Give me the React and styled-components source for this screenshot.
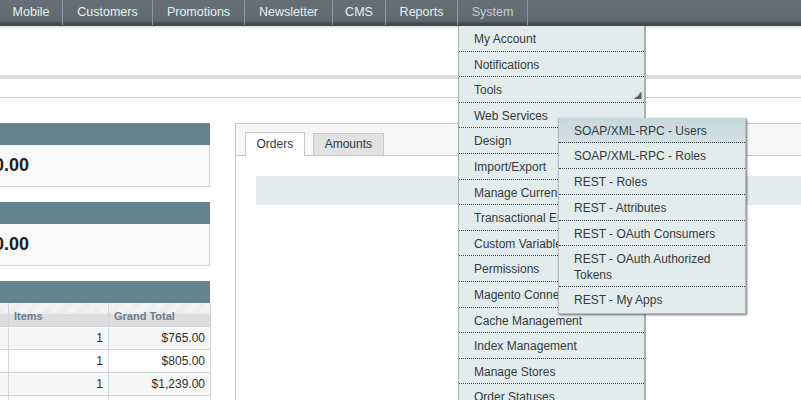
import React from "react";
import styled, { createGlobalStyle } from "styled-components";

const Global = createGlobalStyle`
  html, body { margin: 0; padding: 0; background: #fff; overflow: hidden; }
  body { font: 12px "Liberation Sans", Arial, sans-serif; color: #2f2f2f; }
`;

const Page = styled.div`
  width: 801px;
  height: 400px;
  overflow: hidden;
  position: relative;
`;

const Nav = styled.nav`
  display: flex;
  height: 26px;
  box-sizing: border-box;
  background: linear-gradient(#666f75 0, #5f6a70 21px, #454d52 23px, #3f474b 26px);
`;

const NavItem = styled.div`
  position: relative;
  flex: none;
  box-sizing: border-box;
  width: ${(p) => p.$w}px;
  height: 25px;
  border-right: 1px solid #8b979c;
  font-size: 12.5px;
  line-height: 24px;
  text-align: center;
  color: ${(p) => (p.$active ? "#c3cdd1" : "#e8eef0")};
`;

const Menu = styled.div`
  position: absolute;
  z-index: 5;
  top: 26px;
  left: 0;
  width: 188px;
  box-sizing: border-box;
  border-left: 1px solid #a9b0b2;
  border-right: 2px solid #a9b0b2;
  background: #e3ecec;
  text-align: left;
`;

const MenuItem = styled.div`
  position: relative;
  box-sizing: border-box;
  height: 25.6px;
  padding-left: 15px;
  border-bottom: 1px dotted #3c4448;
  font-size: 12px;
  line-height: 27px;
  color: #333b40;
`;

const Arrow = styled.svg`
  position: absolute;
  right: 2px;
  bottom: 2px;
  width: 9px;
  height: 9px;
`;

const SubMenu = styled.div`
  position: absolute;
  z-index: 6;
  top: 15px;
  left: 99px;
  width: 188px;
  box-sizing: border-box;
  border: 1px solid #b4bbbd;
  border-top: 0;
  background: #e3ecec;
  box-shadow: 1px 1px 2px rgba(0, 0, 0, 0.55);
`;

const SubItem = styled.div`
  box-sizing: border-box;
  min-height: 25.7px;
  padding: 5px 20px 3px 15px;
  border-bottom: ${(p) => (p.$last ? "0" : "1px dotted #3c4448")};
  font-size: 12px;
  line-height: 16px;
  color: #333b40;
  background: ${(p) => (p.$hot ? "linear-gradient(#c8d9dc, #d0e0e2)" : "transparent")};
`;

const TopStrip = styled.div`
  height: 2px;
  background: #e4eaea;
`;

const Header = styled.div`
  height: 47px;
  border-bottom: 4px solid #dcdcdc;
`;

const Notice = styled.div`
  height: 18px;
  border-bottom: 1px solid #ccc;
`;

const Content = styled.div`
  display: flex;
  align-items: flex-start;
  gap: 25px;
  padding-top: 25px;
  margin-left: -40px;
`;

const Side = styled.div`
  flex: none;
  width: 250px;
  display: flex;
  flex-direction: column;
  gap: 15px;
`;

const Card = styled.section``;

const CardHead = styled.div`
  height: 22px;
  background: #65838d;
`;

const CardBody = styled.div`
  box-sizing: border-box;
  height: 42px;
  padding-left: 23px;
  border: 1px solid #d2d6d8;
  border-top: 0;
  background: #f9f9f9;
  font-size: 18px;
  font-weight: bold;
  line-height: 40px;
  color: #222;
`;

const Table = styled.table`
  width: 250px;
  table-layout: fixed;
  border-collapse: collapse;
`;

const Th = styled.th`
  box-sizing: border-box;
  height: 23px;
  padding: 3px 0 0 5px;
  border: 1px solid #d2d6d8;
  border-top: 0;
  text-align: left;
  font-size: 11px;
  font-weight: bold;
  color: #6a7d8a;
  background:
    linear-gradient(transparent 11px, #dedede 11px),
    repeating-linear-gradient(135deg, #f6f6f6 0 1px, #e9e9e9 1px 2px);
`;

const Td = styled.td`
  box-sizing: border-box;
  height: 23px;
  padding: 0 5px 0 0;
  border: 1px solid #d2d6d8;
  text-align: right;
  font-size: 12px;
  color: #2f2f2f;
  background: ${(p) => (p.$odd ? "#f5f6f6" : "#fff")};
`;

const Orders = styled.section`
  flex: none;
  width: 700px;
  height: 400px;
  box-sizing: border-box;
  border: 1px solid #c8c8c8;
  border-right: 0;
`;

const TabBar = styled.div`
  display: flex;
  align-items: flex-end;
  gap: 8px;
  height: 32px;
  box-sizing: border-box;
  padding-left: 9px;
  border-bottom: 1px solid #c8c8c8;
  background: #f7f7f7;
`;

const Tab = styled.div`
  box-sizing: border-box;
  height: ${(p) => (p.$active ? "24px" : "22px")};
  padding: 0 ${(p) => (p.$active ? "10.5px" : "11px")};
  margin-bottom: ${(p) => (p.$active ? "-1px" : "0")};
  border: 1px solid #c8c8c8;
  border-bottom: 0;
  background: ${(p) => (p.$active ? "#fff" : "#e2e2e2")};
  font-size: 12px;
  line-height: ${(p) => (p.$active ? "23px" : "21px")};
  color: #2f3a40;
`;

const ChartBar = styled.div`
  height: 29px;
  margin: 20px 0 0 20px;
  background: #e4eded;
`;

const nav = [["Mobile", 63], ["Customers", 90], ["Promotions", 92], ["Newsletter", 88], ["CMS", 53], ["Reports", 72]];
const menu = [
  "My Account", "Notifications", "Tools", "Web Services", "Design", "Import/Export",
  "Manage Currency Rates", "Transactional Emails", "Custom Variables", "Permissions",
  "Magento Connect", "Cache Management", "Index Management", "Manage Stores", "Order Statuses",
];
const sub = [
  "SOAP/XML-RPC - Users", "SOAP/XML-RPC - Roles", "REST - Roles", "REST - Attributes",
  "REST - OAuth Consumers", "REST - OAuth Authorized Tokens", "REST - My Apps",
];
const rows = [["1", "$765.00"], ["1", "$805.00"], ["1", "$1,239.00"], ["", ""]];

export default function App() {
  return (
    <Page>
      <Global />
      <Nav>
        {nav.map(([n, w]) => (
          <NavItem key={n} $w={w}>{n}</NavItem>
        ))}
        <NavItem $active $w={70}>
          System
          <Menu>
            {menu.map((m) => (
              <MenuItem key={m}>
                {m}
                {m === "Tools" && (
                  <Arrow viewBox="0 0 9 9">
                    <path d="M8.5 .5V8H1Z" fill="#4f5b61" />
                    <path d="M6.5 3.2 3.4 6.3" stroke="#e3ecec" strokeWidth="0.8" />
                  </Arrow>
                )}
                {m === "Web Services" && (
                  <SubMenu>
                    {sub.map((s, i) => (
                      <SubItem key={s} $hot={i === 0} $last={i === sub.length - 1}>{s}</SubItem>
                    ))}
                  </SubMenu>
                )}
              </MenuItem>
            ))}
          </Menu>
        </NavItem>
      </Nav>
      <TopStrip />
      <Header />
      <Notice />
      <Content>
        <Side>
          <Card>
            <CardHead />
            <CardBody>$0.00</CardBody>
          </Card>
          <Card>
            <CardHead />
            <CardBody>$0.00</CardBody>
          </Card>
          <Card>
            <CardHead />
            <Table>
              <colgroup>
                <col width="48" />
                <col width="100" />
                <col width="102" />
              </colgroup>
              <thead>
                <tr>
                  <Th />
                  <Th>Items</Th>
                  <Th>Grand Total</Th>
                </tr>
              </thead>
              <tbody>
                {rows.map((r, i) => (
                  <tr key={i}>
                    <Td $odd={i % 2 === 0} />
                    <Td $odd={i % 2 === 0}>{r[0]}</Td>
                    <Td $odd={i % 2 === 0}>{r[1]}</Td>
                  </tr>
                ))}
              </tbody>
            </Table>
          </Card>
        </Side>
        <Orders>
          <TabBar>
            <Tab $active>Orders</Tab>
            <Tab>Amounts</Tab>
          </TabBar>
          <ChartBar />
        </Orders>
      </Content>
    </Page>
  );
}
